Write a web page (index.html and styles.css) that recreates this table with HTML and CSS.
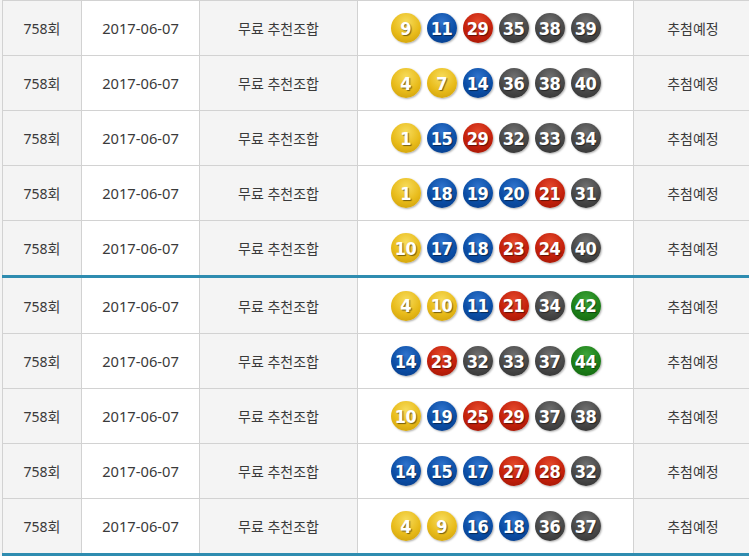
FILE: index.html
```html
<!DOCTYPE html>
<html lang="ko">
<head>
<meta charset="utf-8">
<title>추천조합</title>
<link rel="stylesheet" href="styles.css">
</head>
<body>
<div class="wrap">
<table class="lotto group">
  <colgroup><col class="c1"><col class="c2"><col class="c3"><col class="c4"><col class="c5"></colgroup>
  <tbody>
    <tr><td class="g">758회</td><td class="d">2017-06-07</td><td class="g">무료 추천조합</td><td><div class="balls"><span class="ball y">9</span><span class="ball b">11</span><span class="ball r">29</span><span class="ball k">35</span><span class="ball k">38</span><span class="ball k">39</span></div></td><td class="g">추첨예정</td></tr>
    <tr><td class="g">758회</td><td class="d">2017-06-07</td><td class="g">무료 추천조합</td><td><div class="balls"><span class="ball y">4</span><span class="ball y">7</span><span class="ball b">14</span><span class="ball k">36</span><span class="ball k">38</span><span class="ball k">40</span></div></td><td class="g">추첨예정</td></tr>
    <tr><td class="g">758회</td><td class="d">2017-06-07</td><td class="g">무료 추천조합</td><td><div class="balls"><span class="ball y">1</span><span class="ball b">15</span><span class="ball r">29</span><span class="ball k">32</span><span class="ball k">33</span><span class="ball k">34</span></div></td><td class="g">추첨예정</td></tr>
    <tr><td class="g">758회</td><td class="d">2017-06-07</td><td class="g">무료 추천조합</td><td><div class="balls"><span class="ball y">1</span><span class="ball b">18</span><span class="ball b">19</span><span class="ball b">20</span><span class="ball r">21</span><span class="ball k">31</span></div></td><td class="g">추첨예정</td></tr>
    <tr><td class="g">758회</td><td class="d">2017-06-07</td><td class="g">무료 추천조합</td><td><div class="balls"><span class="ball y">10</span><span class="ball b">17</span><span class="ball b">18</span><span class="ball r">23</span><span class="ball r">24</span><span class="ball k">40</span></div></td><td class="g">추첨예정</td></tr>
  </tbody>
</table>
<table class="lotto group">
  <colgroup><col class="c1"><col class="c2"><col class="c3"><col class="c4"><col class="c5"></colgroup>
  <tbody>
    <tr><td class="g">758회</td><td class="d">2017-06-07</td><td class="g">무료 추천조합</td><td><div class="balls"><span class="ball y">4</span><span class="ball y">10</span><span class="ball b">11</span><span class="ball r">21</span><span class="ball k">34</span><span class="ball n">42</span></div></td><td class="g">추첨예정</td></tr>
    <tr><td class="g">758회</td><td class="d">2017-06-07</td><td class="g">무료 추천조합</td><td><div class="balls"><span class="ball b">14</span><span class="ball r">23</span><span class="ball k">32</span><span class="ball k">33</span><span class="ball k">37</span><span class="ball n">44</span></div></td><td class="g">추첨예정</td></tr>
    <tr><td class="g">758회</td><td class="d">2017-06-07</td><td class="g">무료 추천조합</td><td><div class="balls"><span class="ball y">10</span><span class="ball b">19</span><span class="ball r">25</span><span class="ball r">29</span><span class="ball k">37</span><span class="ball k">38</span></div></td><td class="g">추첨예정</td></tr>
    <tr><td class="g">758회</td><td class="d">2017-06-07</td><td class="g">무료 추천조합</td><td><div class="balls"><span class="ball b">14</span><span class="ball b">15</span><span class="ball b">17</span><span class="ball r">27</span><span class="ball r">28</span><span class="ball k">32</span></div></td><td class="g">추첨예정</td></tr>
    <tr><td class="g">758회</td><td class="d">2017-06-07</td><td class="g">무료 추천조합</td><td><div class="balls"><span class="ball y">4</span><span class="ball y">9</span><span class="ball b">16</span><span class="ball b">18</span><span class="ball k">36</span><span class="ball k">37</span></div></td><td class="g">추첨예정</td></tr>
  </tbody>
</table>
</div>
</body>
</html>
```
FILE: styles.css
```css
html, body {
  margin: 0;
  padding: 0;
  background: #f4f4f4;
  overflow: hidden;
}
.wrap {
  width: 749px;
  overflow: hidden;
  background: #f4f4f4;
}
.lotto {
  border-collapse: collapse;
  table-layout: fixed;
  width: 750px;
  margin-left: 2px;
  font-family: "Noto Sans", "Noto Sans CJK KR", sans-serif;
  font-size: 14px;
  color: #3a3a3a;
}
.c1 { width: 79px; }
.c2 { width: 118px; }
.c3 { width: 158px; }
.c4 { width: 276px; }
.c5 { width: 119px; }
.lotto td {
  height: 54px;
  padding: 0;
  border: 1px solid #d2d2d2;
  text-align: center;
  vertical-align: middle;
  background: #fff;
}
.lotto td.d { font-size: 14.7px; }
.lotto td.g { background: #f4f4f4; }
.lotto tr:last-child td { border-bottom: 3px solid #2e8cb0; }
.lotto + .lotto tr:first-child td { border-top: 0; height: 55px; }
.balls {
  display: flex;
  justify-content: center;
  gap: 6px;
}
.ball {
  width: 30px;
  height: 30px;
  border-radius: 50%;
  display: flex;
  align-items: center;
  justify-content: center;
  color: #fff;
  font-family: "Liberation Sans Narrow", "DejaVu Sans Condensed", "Liberation Sans", sans-serif;
  font-weight: bold;
  font-size: 18px;
  letter-spacing: -0.6px;
  text-shadow: 1px 1px 1px rgba(0,0,0,0.5);
  box-shadow: 1px 1px 2px rgba(0,0,0,0.3);
}
.ball.y { background: radial-gradient(circle at 50% 30%, #f7dc5c 0%, #e8bb1a 55%, #c99a08 100%); }
.ball.b { background: radial-gradient(circle at 50% 30%, #2f73cc 0%, #0b4ea6 55%, #073a85 100%); }
.ball.r { background: radial-gradient(circle at 50% 30%, #e44a2c 0%, #c4200b 55%, #9a1505 100%); }
.ball.k { background: radial-gradient(circle at 50% 30%, #707070 0%, #484848 55%, #2f2f2f 100%); }
.ball.n { background: radial-gradient(circle at 50% 30%, #3ea53a 0%, #1c7f18 55%, #12600f 100%); }
```
